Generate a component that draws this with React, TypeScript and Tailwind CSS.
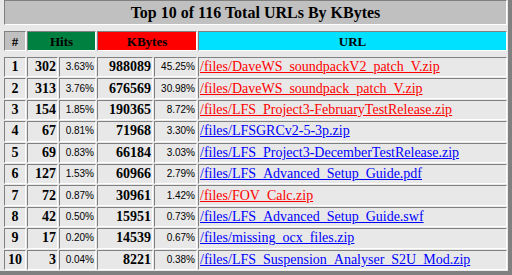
const ROWS = [
  { hits: 302, hp: '3.63%', kb: 988089, kp: '45.25%', url: '/files/DaveWS_soundpackV2_patch_V.zip', seen: true },
  { hits: 313, hp: '3.76%', kb: 676569, kp: '30.98%', url: '/files/DaveWS_soundpack_patch_V.zip', seen: true },
  { hits: 154, hp: '1.85%', kb: 190365, kp: '8.72%', url: '/files/LFS_Project3-FebruaryTestRelease.zip', seen: true },
  { hits: 67, hp: '0.81%', kb: 71968, kp: '3.30%', url: '/files/LFSGRCv2-5-3p.zip', seen: false },
  { hits: 69, hp: '0.83%', kb: 66184, kp: '3.03%', url: '/files/LFS_Project3-DecemberTestRelease.zip', seen: false },
  { hits: 127, hp: '1.53%', kb: 60966, kp: '2.79%', url: '/files/LFS_Advanced_Setup_Guide.pdf', seen: false },
  { hits: 72, hp: '0.87%', kb: 30961, kp: '1.42%', url: '/files/FOV_Calc.zip', seen: true },
  { hits: 42, hp: '0.50%', kb: 15951, kp: '0.73%', url: '/files/LFS_Advanced_Setup_Guide.swf', seen: false },
  { hits: 17, hp: '0.20%', kb: 14539, kp: '0.67%', url: '/files/missing_ocx_files.zip', seen: false },
  { hits: 3, hp: '0.04%', kb: 8221, kp: '0.38%', url: '/files/LFS_Suspension_Analyser_S2U_Mod.zip', seen: false },
]

// inset 1px border, like an old-school <table border=2>
const cell = 'border border-t-[#808080] border-l-[#808080] border-b-white border-r-white flex items-center px-px leading-none min-h-0'
const cols = 'grid grid-cols-[22px_31px_37px_56px_43px_1fr] gap-px'
const pct = "justify-end text-[10px] font-['Liberation_Sans',sans-serif]"

export default function App() {
  return (
    <div className="w-[512px] h-[275px] overflow-hidden bg-[#e8e8e8] text-black font-['Liberation_Serif',serif]">
      <div className="h-[275px] flex flex-col border-r-4 border-b-4 border-[#808080] pl-[4px] pr-px pb-px">
        <div className={`${cell} h-[25px] shrink-0 justify-center bg-[#c0c0c0] text-[16px] font-bold`}>
          Top 10 of 116 Total URLs By KBytes
        </div>

        <div className={`${cols} mt-[6px] h-[20px] shrink-0 text-[13px] font-bold`}>
          <div className={`${cell} justify-center bg-[#c0c0c0]`}>#</div>
          <div className={`${cell} col-span-2 justify-center bg-[#008040]`}>Hits</div>
          <div className={`${cell} col-span-2 justify-center bg-[#ff0000]`}>KBytes</div>
          <div className={`${cell} justify-center bg-[#00e0ff]`}>URL</div>
        </div>

        <div className={`${cols} mt-[6px] flex-1 min-h-0 grid-rows-[repeat(10,minmax(0,1fr))]`}>
          {ROWS.map((r, i) => (
            <div key={r.url} className="contents">
              <div className={`${cell} justify-center text-[14px] font-bold`}>{i + 1}</div>
              <div className={`${cell} justify-end text-[14px] font-bold`}>{r.hits}</div>
              <div className={`${cell} ${pct}`}>{r.hp}</div>
              <div className={`${cell} justify-end text-[14px] font-bold`}>{r.kb}</div>
              <div className={`${cell} ${pct}`}>{r.kp}</div>
              <div className={`${cell} text-[14px] whitespace-nowrap overflow-hidden`}>
                <a href="#" className={`underline ${r.seen ? 'text-[#ff0000]' : 'text-[#0000ff]'}`}>{r.url}</a>
              </div>
            </div>
          ))}
        </div>
      </div>
    </div>
  )
}
